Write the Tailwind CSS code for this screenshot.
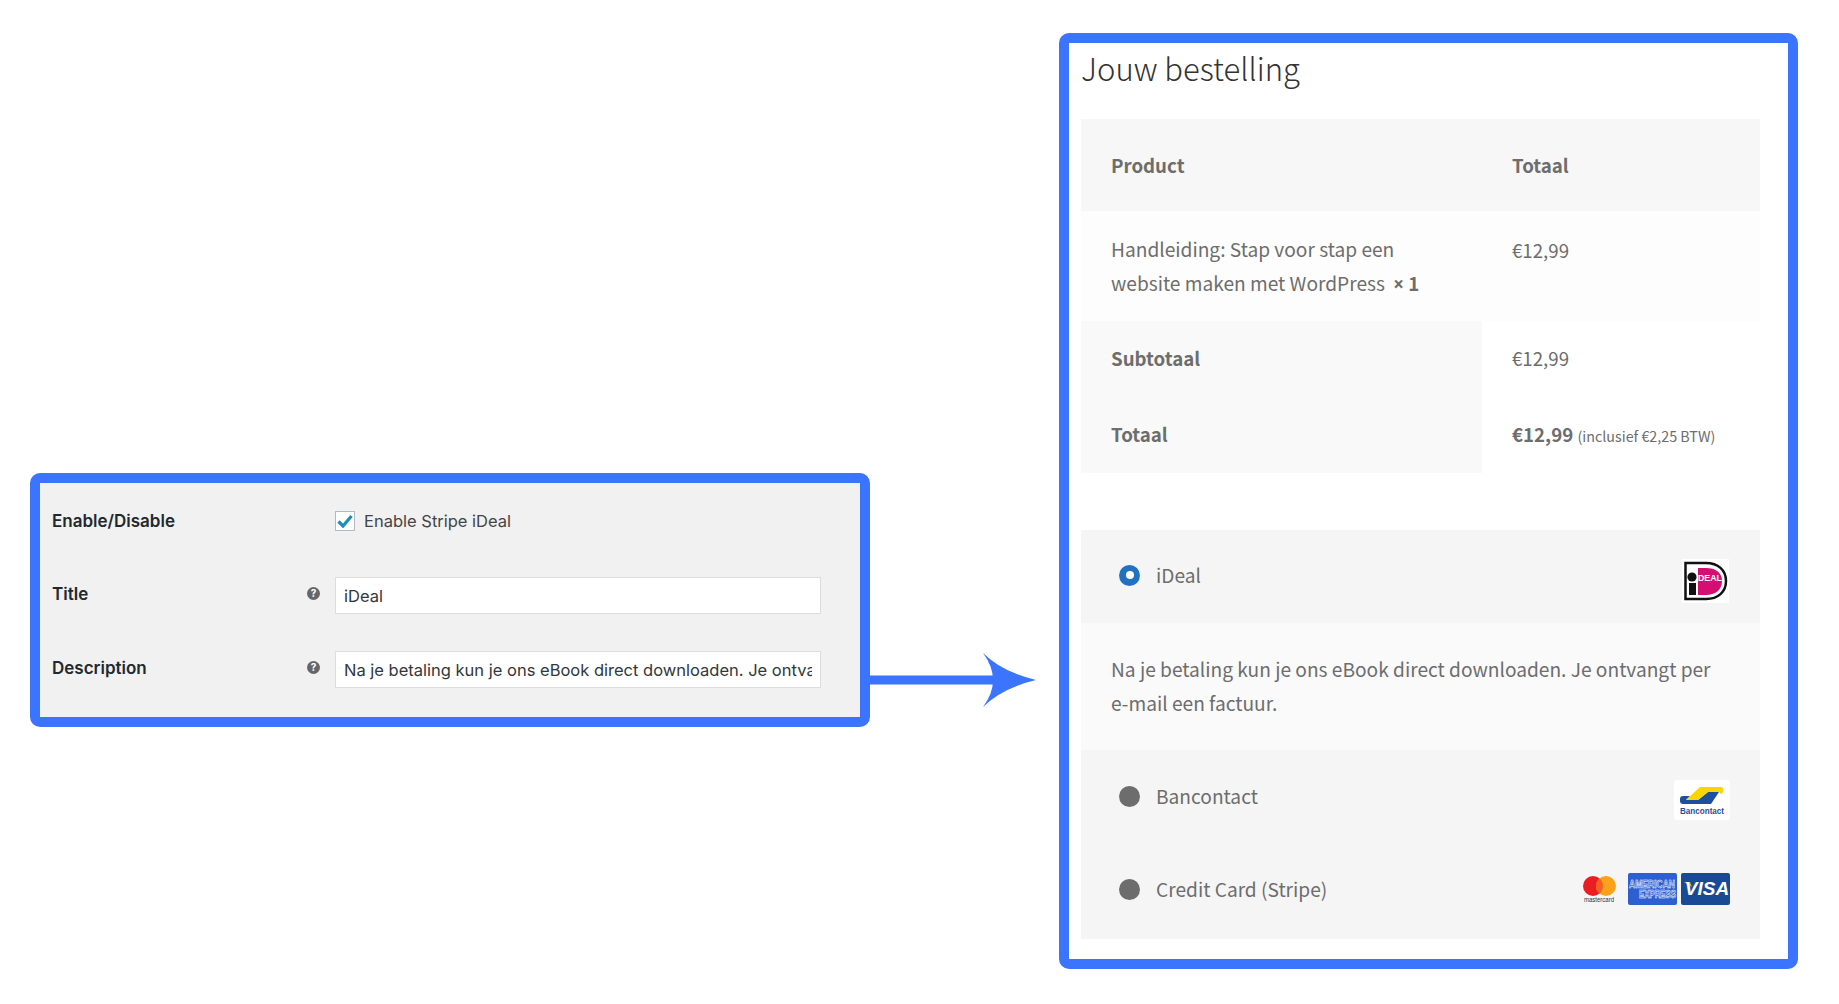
<!DOCTYPE html>
<html lang="en">
<head>
    <meta charset="UTF-8">
    <title>Stripe iDeal</title>
    <script src="https://cdn.jsdelivr.net/npm/@tailwindcss/browser@4"></script>
</head>
<body class="bg-white">
    <div class="flex items-start w-[1839px] h-[1004px] pl-[30px] pt-[33px] overflow-hidden">

        <!-- Admin settings -->
        <div class="mt-[440px] w-[840px] h-[254px] shrink-0 border-[10px] border-[#3b75ff] rounded-[10px] bg-[#f1f1f1] pl-[12px] font-['Inter',sans-serif] text-[#23282d]">
            <div class="flex items-center h-[19px] mt-[28px]">
                <div class="w-[283px] text-[17px] font-semibold pt-[2px]">Enable/Disable</div>
                <span class="flex items-center justify-center w-[20px] h-[20px] border border-[#b4b9be] bg-white">
                    <svg width="16" height="14" viewBox="0 0 16 14"><path d="M1.5 7.5 L6 12 L14.5 2" fill="none" stroke="#1e8cbe" stroke-width="3.2"/></svg>
                </span>
                <span class="ml-[9px] pt-[2px] text-[16.500px] text-[#444]">Enable Stripe iDeal</span>
            </div>
            <div class="flex items-center h-[37px] mt-[47px]">
                <div class="w-[255px] text-[17px] font-semibold pb-[2px]">Title</div>
                <span class="flex items-center justify-center w-[13px] h-[13px] rounded-full bg-[#666] text-white text-[10px] font-bold leading-none -mt-[5px] mr-[15px]">?</span>
                <input class="w-[486px] h-[37px] border border-[#ddd] bg-white px-[8px] text-[16.500px] text-[#32373c] outline-none" value="iDeal" readonly>
            </div>
            <div class="flex items-center h-[37px] mt-[37px]">
                <div class="w-[255px] text-[17px] font-semibold pb-[2px]">Description</div>
                <span class="flex items-center justify-center w-[13px] h-[13px] rounded-full bg-[#666] text-white text-[10px] font-bold leading-none -mt-[5px] mr-[15px]">?</span>
                <input class="w-[486px] h-[37px] border border-[#ddd] bg-white px-[8px] text-[16.500px] text-[#32373c] outline-none" value="Na je betaling kun je ons eBook direct downloaden. Je ontvangt per e-mail een factuur." readonly>
            </div>
        </div>

        <!-- Arrow -->
        <svg class="mt-[620px] shrink-0" width="166" height="54" viewBox="0 0 166 54">
            <rect x="0" y="22.500" width="125" height="9" fill="#3b75ff"/>
            <path d="M113 0 Q132 19 166 27 Q132 35 113 54 Q133 27 113 0 Z" fill="#3b75ff"/>
        </svg>

        <!-- Checkout order -->
        <div class="ml-[23px] w-[739px] h-[936px] shrink-0 border-[10px] border-[#3b75ff] rounded-[10px] bg-white pl-[12px] font-['Noto_Sans_CJK_JP',sans-serif] text-[19.150px] text-[#6d6d6d]">
            <h2 class="h-[76px] pt-[2px] text-[31px] leading-[46px] font-light text-[#333]">Jouw bestelling</h2>

            <div class="w-[679px]">
                <div class="flex items-center h-[92px] bg-[#f7f7f7] font-bold text-[18.700px]">
                    <div class="w-[401px] pl-[30px]">Product</div>
                    <div class="pl-[30px]">Totaal</div>
                </div>
                <div class="flex h-[110px] pt-[22px] bg-[#fdfdfd] leading-[33px]">
                    <div class="w-[401px] pl-[30px] whitespace-nowrap">Handleiding: Stap voor stap een<br>website maken met WordPress <b class="ml-[4px] text-[18.700px]"><span class="font-['Noto_Sans',sans-serif]">×</span> 1</b></div>
                    <div class="pl-[30px] text-[18.700px]">€12,99</div>
                </div>
                <div class="flex items-center h-[76px]">
                    <div class="flex items-center w-[401px] h-full pl-[30px] pb-[1px] bg-[#f9f9f9] font-bold text-[18.700px]">Subtotaal</div>
                    <div class="pl-[30px] pb-[1px] text-[18.700px]">€12,99</div>
                </div>
                <div class="flex items-center h-[76px]">
                    <div class="flex items-center w-[401px] h-full pl-[30px] pb-[1px] bg-[#f9f9f9] font-bold text-[18.700px]">Totaal</div>
                    <div class="pl-[30px] pb-[1px]"><b class="text-[18.700px]">€12,99</b> <span class="text-[14.300px]">(inclusief €2,25 BTW)</span></div>
                </div>
            </div>

            <div class="w-[679px] mt-[57px]">
                <div class="flex items-center h-[93px] pl-[38px] pr-[31px] pb-[3px] bg-[#f5f5f5]">
                    <span class="flex items-center justify-center w-[21px] h-[21px] rounded-full bg-[#2272bf]"><span class="w-[8px] h-[8px] rounded-full bg-white"></span></span>
                    <span class="ml-[16px]">iDeal</span>
                    <svg class="ml-auto mt-[11px]" width="47" height="44" viewBox="0 0 47 44">
                        <rect width="47" height="44" fill="#fff"/>
                        <path d="M3.500 4 H24 C36 4 44 11 44 22 C44 33 36 40 24 40 H3.500 Z" fill="#fff" stroke="#111" stroke-width="2.500"/>
                        <path d="M16 9 H24 C33 9 40 13 40 22 C40 31 33 36 24 36 H16 Z" fill="#d50f72"/>
                        <circle cx="10" cy="18" r="4.600" fill="#111"/>
                        <rect x="7" y="24" width="7" height="12" fill="#111"/>
                        <text x="16" y="22" font-family="Liberation Sans" font-weight="700" font-size="9.500" textLength="24" lengthAdjust="spacingAndGlyphs" fill="#fff">DEAL</text>
                    </svg>
                </div>
                <div class="h-[127px] pt-[30px] pl-[30px] bg-[#fafafa] leading-[33.500px] whitespace-nowrap">Na je betaling kun je ons eBook direct downloaden. Je ontvangt per<br>e-mail een factuur.</div>
                <div class="flex items-center h-[95px] pl-[38px] pr-[30px] pb-[2px] bg-[#f5f5f5]">
                    <span class="w-[21px] h-[21px] rounded-full bg-[#6d6d6d]"></span>
                    <span class="ml-[16px]">Bancontact</span>
                    <svg class="ml-auto mt-[6px]" width="56" height="40" viewBox="0 0 56 40">
                        <rect width="56" height="40" rx="3" fill="#fff"/>
                        <path d="M16 16 L12 20 H24 L34 12 H45 L37 24 H9 Q6 24 6 21 V19 Q6 16 9 16 Z" fill="#1e4f9e"/>
                        <path d="M12 20 L26 7 H47 Q49 7 49 9 V12 Q49 14 47 14 L45 12 H34 L24 20 Z" fill="#fbd500"/>
                        <text x="6" y="34" font-family="Liberation Sans" font-weight="700" font-size="9.500" textLength="44" lengthAdjust="spacingAndGlyphs" fill="#1e4f9e">Bancontact</text>
                    </svg>
                </div>
                <div class="flex items-center h-[94px] pl-[38px] pr-[30px] pb-[6px] bg-[#f5f5f5]">
                    <span class="w-[21px] h-[21px] rounded-full bg-[#6d6d6d]"></span>
                    <span class="ml-[16px]">Credit Card (Stripe)</span>
                    <svg class="ml-auto" width="34" height="32" viewBox="0 0 34 32">
                        <circle cx="11" cy="13" r="10" fill="#eb1c22"/>
                        <circle cx="24" cy="13" r="10" fill="#faa21b"/>
                        <path d="M17.500 5.400 A10 10 0 0 1 17.500 20.600 A10 10 0 0 1 17.500 5.400 Z" fill="#f26122"/>
                        <text x="2" y="29" font-family="Liberation Sans" font-size="6.500" textLength="30" lengthAdjust="spacingAndGlyphs" fill="#333">mastercard</text>
                    </svg>
                    <svg class="ml-[12px]" width="49" height="32" viewBox="0 0 49 32">
                        <rect width="49" height="32" rx="2" fill="#2e5fd0"/>
                        <text x="1" y="15" font-family="Liberation Sans" font-weight="700" font-size="10" textLength="46" lengthAdjust="spacingAndGlyphs" fill="#2e5fd0" stroke="#fff" stroke-width="0.500">AMERICAN</text>
                        <text x="11" y="25" font-family="Liberation Sans" font-weight="700" font-size="10" textLength="37" lengthAdjust="spacingAndGlyphs" fill="#2e5fd0" stroke="#fff" stroke-width="0.500">EXPRESS</text>
                    </svg>
                    <svg class="ml-[4px]" width="49" height="32" viewBox="0 0 49 32">
                        <rect width="49" height="32" rx="2" fill="#1a4a94"/>
                        <path d="M3 9 L9 9 L11 14 Z" fill="#f6a81c"/>
                        <text x="26" y="22" text-anchor="middle" font-family="Liberation Sans" font-weight="700" font-style="italic" font-size="19" fill="#fff">VISA</text>
                    </svg>
                </div>
            </div>
        </div>
    </div>
</body>
</html>
